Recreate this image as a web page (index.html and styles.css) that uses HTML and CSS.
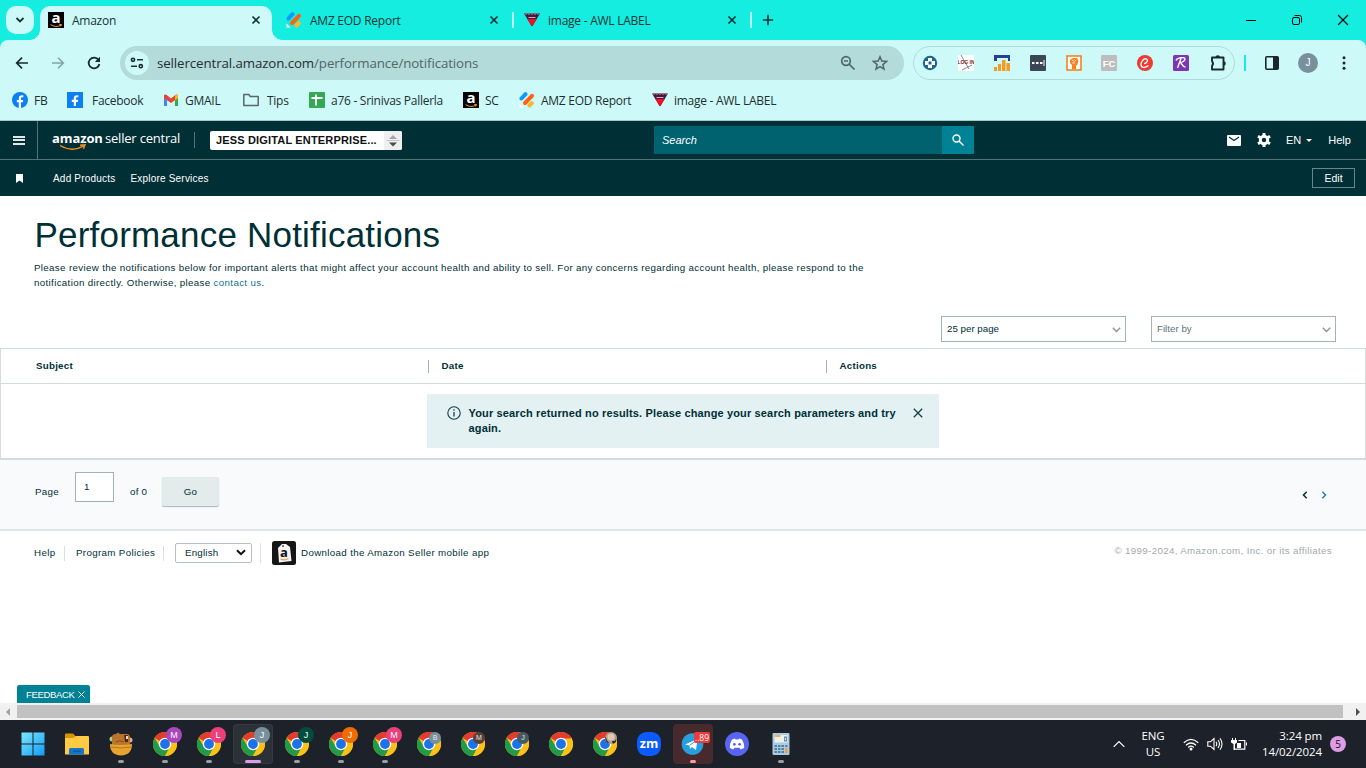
FILE: index.html
```
<!DOCTYPE html>
<html lang="en">

<head>
    <meta charset="UTF-8">
    <meta name="viewport" content="width=device-width, initial-scale=1.0">
    <title>Amazon</title>
    <link rel="stylesheet" href="styles.css">
</head>

<body>
<!-- Shared icons -->
<svg class="defs" width="0" height="0">
    <symbol id="amazon" viewBox="0 0 16 16">
        <rect width="16" height="16" fill="#000"/>
        <text x="8" y="11" font-family="Open Sans, sans-serif" font-size="15" font-weight="700" fill="#fff" text-anchor="middle">a</text>
        <path d="M2.500 12.600q5.500 3.400 10.500.5M11.200 12.400l2.300.1-.8 2" fill="none" stroke="#f19a2e" stroke-width="1"/>
    </symbol>
    <symbol id="eod" viewBox="0 0 16 16">
        <g stroke-width="4" stroke-linecap="round">
            <path d="M2.500 6.500L6.500 2.200" stroke="#0a9bff"/>
            <path d="M6 11L13 3.800" stroke="#ff6110"/>
            <path d="M10.500 13.500l2.300-2.300" stroke="#ffb52b"/>
        </g>
        <path d="M.5 11.500v4h4z" fill="#fff"/>
    </symbol>
    <symbol id="awl" viewBox="0 0 16 16">
        <path d="M0 1.500h16L8.500 14h-1z" fill="#35204c"/>
        <path d="M1 2h14" stroke="#c05a64" stroke-width="1.500" stroke-dasharray="2 1"/>
        <path d="M4.500 5.500h7" stroke="#e9a4b8" stroke-width="1"/>
        <path d="M3.500 7h9L8 14.500z" fill="#fb0d1b"/>
    </symbol>
    <symbol id="close" viewBox="0 0 10 10">
        <path d="M1.500 1.500l7 7M8.500 1.500l-7 7" fill="none" stroke="#173436" stroke-width="1.700"/>
    </symbol>
    <symbol id="chrome" viewBox="0 0 24 24">
        <circle cx="12" cy="12" r="12" fill="#fbbf12"/>
        <path d="M12 12L1.600 6A12 12 0 0 1 22.400 6z" fill="#e33b2e"/>
        <path d="M1.600 6A12 12 0 0 0 12 24L17.200 15 12 12 7 15z" fill="#229b48"/>
        <path d="M12 6.500h10.700A12 12 0 0 1 12 24L16.800 15z" fill="#fbc116"/>
        <circle cx="12" cy="12" r="6.200" fill="#fff"/>
        <circle cx="12" cy="12" r="4.900" fill="#1a73e8"/>
    </symbol>
</svg>

<div class="tabs">
    <div class="tab-search">
        <svg width="10" height="8" viewBox="0 0 10 8"><path d="M1.500 2L5 5.500 8.500 2" fill="none" stroke="#173436" stroke-width="1.800"/></svg>
    </div>
    <div class="tab active">
        <svg class="favicon"><use href="#amazon"/></svg>
        <span class="tab-title">Amazon</span>
        <svg class="tab-close"><use href="#close"/></svg>
    </div>
    <div class="tab">
        <svg class="favicon"><use href="#eod"/></svg>
        <span class="tab-title">AMZ EOD Report</span>
        <svg class="tab-close"><use href="#close"/></svg>
    </div>
    <div class="tab">
        <svg class="favicon"><use href="#awl"/></svg>
        <span class="tab-title">image - AWL LABEL</span>
        <svg class="tab-close"><use href="#close"/></svg>
    </div>
    <svg class="new-tab" width="12" height="12" viewBox="0 0 12 12"><path d="M6 .8v10.400M.8 6h10.400" stroke="#173436" stroke-width="1.700"/></svg>
    <div class="window-buttons">
        <svg width="12" height="12" viewBox="0 0 12 12"><path d="M1 6.500h10" stroke="#000"/></svg>
        <svg width="12" height="12" viewBox="0 0 12 12"><g fill="none" stroke="#000"><rect x="1.500" y="3.500" width="7" height="7" rx="1.500"/><path d="M3.500 1.500h5a2 2 0 0 1 2 2v5"/></g></svg>
        <svg width="12" height="12" viewBox="0 0 12 12"><path d="M1 1l10 10M11 1L1 11" stroke="#000" stroke-width="1.100"/></svg>
    </div>
</div>

<div class="toolbar">
    <div class="nav-buttons">
        <svg width="14" height="14" viewBox="0 0 14 14"><path d="M13 7H2M7 1.700L1.700 7 7 12.300" fill="none" stroke="#172b2c" stroke-width="1.700"/></svg>
        <svg width="14" height="14" viewBox="0 0 14 14"><path d="M1 7h11M7 1.700L12.300 7 7 12.300" fill="none" stroke="#83a3a3" stroke-width="1.600"/></svg>
        <svg width="14" height="14" viewBox="0 0 14 14"><path d="M11.500 3.800A5.400 5.400 0 1 0 12.400 8" fill="none" stroke="#172b2c" stroke-width="1.800"/><path d="M13 .8V6H7.800z" fill="#172b2c"/></svg>
    </div>
    <div class="address">
        <div class="site-info">
            <svg width="14" height="12" viewBox="0 0 14 12"><g fill="none" stroke="#1d3032" stroke-width="1.600"><circle cx="3" cy="2.800" r="1.600"/><path d="M7 2.800h6M1 9.200h6"/><circle cx="10.800" cy="9.200" r="1.600"/></g></svg>
        </div>
        <span class="url">sellercentral.amazon.com<span class="path">/performance/notifications</span></span>
        <svg class="zoom-icon" width="16" height="16" viewBox="0 0 16 16"><g fill="none" stroke="#4f6767" stroke-width="1.700"><circle cx="6" cy="6" r="4.300"/><path d="M4 6h4M9 9l5.500 5.500"/></g></svg>
        <svg width="16" height="16" viewBox="0 0 16 16"><path d="M8 1.800l1.800 4.300 4.700.4-3.600 3.100 1.100 4.600-4-2.500-4 2.500 1.100-4.600L1.500 6.500l4.700-.4z" fill="none" stroke="#4f6767" stroke-width="1.500"/></svg>
    </div>
    <div class="extensions">
        <svg width="16" height="16" viewBox="0 0 16 16"><circle cx="8" cy="8" r="7.200" fill="#1d6691"/><path d="M6 3h4v3h3v4h-3v3H6v-3H3V6h3z" fill="#fff"/><path d="M6.500 6.500h3v3h-3z" fill="#1d6691"/></svg>
        <svg width="16" height="16" viewBox="0 0 16 16"><rect width="16" height="16" fill="#fff"/><path d="M3 0l8 14M4 15l10-5" stroke="#888"/><text x="8" y="9" font-family="Liberation Sans, sans-serif" font-size="5" font-weight="700" fill="#83202a" text-anchor="middle">LOG IN</text></svg>
        <svg width="16" height="16" viewBox="0 0 16 16"><path d="M0 0h16v6H0z" fill="#22409a"/><path d="M3 3h11v3H3z" fill="#cdf9f8"/><path d="M0 12h3v4H0zM4 9h3v7H4zM8 5h3.500v11H8zM12.500 8H16v8h-3.500z" fill="#f69a22"/></svg>
        <svg width="16" height="16" viewBox="0 0 16 16"><rect width="16" height="16" rx="1" fill="#3b4752"/><path d="M2 7h2.500v2H2zM6 7h2.500v2H6zM10 7h2.500v2H10zM13.500 5h1v6h-1z" fill="#fff"/></svg>
        <svg width="16" height="16" viewBox="0 0 16 16"><rect x="1" y="1" width="14" height="14" fill="#fff" stroke="#f5821f" stroke-width="1.600"/><path d="M4 5l3-2 4 0 1.500 3-1.500 4-1 1v3H6v-4L4 8z" fill="#f5821f"/><path d="M6 5l3 2M8 4l2 2M6 8h3" stroke="#fff" stroke-width=".7"/></svg>
        <svg width="16" height="16" viewBox="0 0 16 16"><rect width="16" height="16" rx="1" fill="#bdbdbd"/><text x="8" y="11.500" font-family="Liberation Sans, sans-serif" font-size="9.500" font-weight="700" fill="#fff" text-anchor="middle">FC</text></svg>
        <svg width="16" height="16" viewBox="0 0 16 16"><circle cx="8" cy="8" r="8" fill="#ee3b32"/><path d="M7 8.500c3 0 4.500-3.500 2.500-4.500S4 6 4 9.500s4 4 7.500 1" fill="none" stroke="#fff" stroke-width="1.300"/></svg>
        <svg width="16" height="16" viewBox="0 0 16 16"><rect width="16" height="16" rx="1.500" fill="#7e35b5"/><path d="M3 5.500c1-3 9-4 9-1.500 0 2-3 3.500-5 3.500 2 0 2 4.500 5.500 4.500M8 3.500L4.500 13" fill="none" stroke="#fff" stroke-width="1.400"/></svg>
        <svg width="18" height="18" viewBox="0 0 18 18"><path d="M3 3.500h11.500v12H3v-3.500q2-2.500 0-5z" fill="none" stroke="#1c2b2c" stroke-width="1.900" stroke-linejoin="round"/><path d="M6.500 3.500a2.300 2.300 0 0 1 4.600 0zM14.500 7.200a2.300 2.300 0 0 1 0 4.600z" fill="#1c2b2c"/></svg>
    </div>
    <div class="toolbar-divider"></div>
    <svg class="side-panel" width="14" height="14" viewBox="0 0 14 14"><rect x=".8" y=".8" width="12.400" height="12.400" rx="1" fill="none" stroke="#1d2627" stroke-width="1.600"/><path d="M8 1h5.500v12H8z" fill="#1d2627"/></svg>
    <div class="profile">J</div>
    <svg class="more" width="4" height="16" viewBox="0 0 4 16"><g fill="#1d2627"><circle cx="2" cy="2.800" r="1.500"/><circle cx="2" cy="8" r="1.500"/><circle cx="2" cy="13.200" r="1.500"/></g></svg>
</div>

<div class="bookmarks">
    <div class="bookmark">
        <svg width="16" height="16" viewBox="0 0 16 16"><circle cx="8" cy="8" r="8" fill="#0c7ff2"/><path d="M6.800 16v-5.700h-2V8h2V6.500c0-2.200 1.200-3.300 3.100-3.300l1.400.1v2h-1c-1 0-1.300.5-1.300 1.200V8h2.200l-.4 2.300H9V16z" fill="#fff"/></svg>
        <span>FB</span>
    </div>
    <div class="bookmark wide">
        <svg width="16" height="16" viewBox="0 0 16 16"><rect width="16" height="16" fill="#0c7ff2"/><path d="M6.800 14v-4H4.800V7.700h2V6.500c0-2.200 1.200-3.300 3.100-3.300l1.400.1v2h-1c-1 0-1.300.5-1.300 1.200v1.200h2.200L10.800 10H9v4z" fill="#fff"/></svg>
        <span>Facebook</span>
    </div>
    <div class="bookmark">
        <svg width="16" height="16" viewBox="0 0 16 16"><path d="M1 3.500h3V14H1z" fill="#4285f4"/><path d="M12 3.500h3V14h-3z" fill="#34a853"/><path d="M1 3c1-1 2-.5 3 .3L8 6.500l4-3.200c1-.8 2-1.300 3-.3v3l-7 5-7-5z" fill="#e94235"/><path d="M12 3.500c1-.8 2-1.300 3-.3V6l-3 2.200z" fill="#fbbc04"/></svg>
        <span>GMAIL</span>
    </div>
    <div class="bookmark folder">
        <svg width="16" height="16" viewBox="0 0 16 16"><path d="M.8 2.500h5l1.500 2h7.900v9H.8z" fill="none" stroke="#5b6667" stroke-width="1.500" stroke-linejoin="round"/></svg>
        <span>Tips</span>
    </div>
    <div class="bookmark">
        <svg width="16" height="16" viewBox="0 0 16 16"><rect width="16" height="16" rx="1" fill="#34a853"/><path d="M2.500 6h11M7 2.500v11" stroke="#fff" stroke-width="2"/></svg>
        <span>a76 - Srinivas Pallerla</span>
    </div>
    <div class="bookmark"><svg width="16" height="16"><use href="#amazon"/></svg><span>SC</span></div>
    <div class="bookmark"><svg width="16" height="16"><use href="#eod"/></svg><span>AMZ EOD Report</span></div>
    <div class="bookmark"><svg width="16" height="16"><use href="#awl"/></svg><span>image - AWL LABEL</span></div>
</div>

<div class="page">
    <header class="header">
        <div class="menu-btn"><i></i><i></i><i></i></div>
        <div class="logo">
            <b>amazon</b><span>seller central</span>
            <svg class="smile" width="28" height="7" viewBox="0 0 28 7"><path d="M1 1.500Q13 8.500 24.500 2.200M21 1.200l5-.5-1.500 4" fill="none" stroke="#f08c22" stroke-width="1.400"/></svg>
        </div>
        <div class="account">
            <span>JESS DIGITAL ENTERPRISE...</span>
            <div class="stepper">
                <svg width="14" height="13" viewBox="0 0 14 13"><path d="M3 5h8L7 1z" fill="#a5a5a5"/><path d="M.5 6.500h13" stroke="#c8c8c8"/><path d="M3 8.500h8l-4 4z" fill="#4b4b4b"/></svg>
            </div>
        </div>
        <div class="search">
            <span>Search</span>
            <div class="search-btn">
                <svg width="14" height="14" viewBox="0 0 14 14"><g fill="none" stroke="#fff" stroke-width="1.400"><circle cx="5.500" cy="5.500" r="3.500"/><path d="M8 8l4.500 4.500"/></g></svg>
            </div>
        </div>
        <div class="header-links">
            <svg width="14" height="11" viewBox="0 0 14 11"><rect width="14" height="11" rx="1" fill="#fff"/><path d="M2 2l5 3.500L12 2" fill="none" stroke="#002f36" stroke-width="1.200"/></svg>
            <svg class="gear" width="14" height="14" viewBox="0 0 14 14"><circle cx="7" cy="7" r="3.700" fill="none" stroke="#fff" stroke-width="3"/><path d="M5.500 0h3v3h-3zM5.500 11h3v3h-3zM.2 4.600l1.500-2.700 2.700 1.500-1.500 2.700zM9.600 10.500l1.500-2.600 2.700 1.500-1.500 2.700zM13.800 4.600l-1.500-2.700-2.700 1.500L11.100 6zM4.400 10.500L2.900 7.900.2 9.400l1.500 2.700z" fill="#fff"/></svg>
            <span class="lang">EN</span>
            <i class="caret"></i>
            <span class="help">Help</span>
        </div>
    </header>
    <nav class="subnav">
        <svg width="7" height="9" viewBox="0 0 7 9"><path d="M0 0h7v9L3.500 6.500 0 9z" fill="#fff"/></svg>
        <a class="first">Add Products</a>
        <a>Explore Services</a>
        <button class="edit">Edit</button>
    </nav>

    <main class="main">
        <h1>Performance Notifications</h1>
        <p class="intro">Please review the notifications below for important alerts that might affect your account health and ability to sell. For any concerns regarding account health, please respond to the<br>notification directly. Otherwise, please <a>contact us</a>.</p>

        <div class="filters">
            <div class="dropdown">
                <span>25 per page</span>
                <svg width="9" height="6" viewBox="0 0 9 6"><path d="M.8.800l3.700 3.700L8.200.8" fill="none" stroke="#879596" stroke-width="1.400"/></svg>
            </div>
            <div class="dropdown empty">
                <span>Filter by</span>
                <svg width="9" height="6" viewBox="0 0 9 6"><path d="M.8.800l3.700 3.700L8.200.8" fill="none" stroke="#879596" stroke-width="1.400"/></svg>
            </div>
        </div>

        <div class="table">
            <div class="table-head">
                <span>Subject</span>
                <span>Date</span>
                <span>Actions</span>
            </div>
            <div class="table-body">
                <div class="alert">
                    <svg class="info" width="14" height="14" viewBox="0 0 14 14"><circle cx="7" cy="7" r="6.200" fill="none" stroke="#143f47" stroke-width="1.100"/><path d="M7 3.200v1.500M7 6v4.500" stroke="#143f47" stroke-width="1.300"/></svg>
                    <p>Your search returned no results. Please change your search parameters and try<br>again.</p>
                    <svg class="dismiss" width="10" height="10" viewBox="0 0 10 10"><path d="M.8.800l8.400 8.400M9.200.800L.8 9.200" stroke="#143f47" stroke-width="1.300"/></svg>
                </div>
            </div>
        </div>

        <div class="pagination">
            <span class="page-label">Page</span>
            <div class="page-input">1</div>
            <span class="page-total">of 0</span>
            <button class="go">Go</button>
            <div class="arrows">
                <svg width="6" height="8" viewBox="0 0 6 8"><path d="M4.700.800L1.500 4l3.200 3.200" fill="none" stroke="#002f36" stroke-width="1.500"/></svg>
                <svg width="6" height="8" viewBox="0 0 6 8"><path d="M1.300.800L4.500 4 1.300 7.200" fill="none" stroke="#2383a8" stroke-width="1.500"/></svg>
            </div>
        </div>

        <footer class="footer">
            <a class="footer-help">Help</a>
            <a class="footer-policies">Program Policies</a>
            <div class="language">
                <span>English</span>
                <svg width="10" height="7" viewBox="0 0 10 7"><path d="M1 1.200l4 4 4-4" fill="none" stroke="#111" stroke-width="2"/></svg>
            </div>
            <div class="app">
                <svg width="24" height="24" viewBox="0 0 24 24"><rect width="24" height="24" rx="2.500" fill="#151515"/><path d="M6 7l4-4 4 0 4 3 1.500 14L7 21.500z" fill="#f4f4f4"/><circle cx="11" cy="5" r="1" fill="#555"/><text x="12" y="16" font-family="Open Sans, sans-serif" font-size="13" font-weight="700" fill="#111" text-anchor="middle">a</text><path d="M8.500 18q4 2 8-.5" fill="none" stroke="#f2a23a" stroke-width="1.300"/></svg>
                <span>Download the Amazon Seller mobile app</span>
            </div>
            <span class="copyright">© 1999-2024, Amazon.com, Inc. or its affiliates</span>
        </footer>
    </main>

    <div class="feedback">
        <span>FEEDBACK</span>
        <svg width="7" height="7" viewBox="0 0 7 7"><path d="M.5.500l6 6M6.500.500l-6 6" stroke="#fff"/></svg>
    </div>
</div>

<div class="scrollbar">
    <i class="scroll-left"></i>
    <div class="thumb"></div>
    <i class="scroll-right"></i>
</div>

<div class="taskbar">
    <div class="apps">
        <div class="app-icon">
            <svg width="24" height="24" viewBox="0 0 24 24"><defs><linearGradient id="win" x2="1" y2="1"><stop stop-color="#7be9ff"/><stop offset="1" stop-color="#119bf5"/></linearGradient></defs><path d="M.500.500h11v11H.500zM12.500.500h11v11h-11zM.500 12.500h11v11H.500zM12.500 12.500h11v11h-11z" fill="url(#win)"/></svg>
        </div>
        <div class="app-icon">
            <svg width="24" height="24" viewBox="0 0 24 24"><path d="M0 2.500a1 1 0 0 1 1-1h7l2 2V8H0z" fill="#d99400"/><path d="M0 6h8.500l2-2H23a1 1 0 0 1 1 1v17.500H0z" fill="#ffcb45"/><path d="M4 22.500v-5a1.500 1.500 0 0 1 1.500-1.500h12a1.500 1.500 0 0 1 1.500 1.500v5z" fill="#1276c9"/><path d="M8 18.500h8v1.300H8z" fill="#0a569d"/></svg>
        </div>
        <div class="app-icon running">
            <svg width="24" height="24" viewBox="0 0 24 24"><circle cx="3" cy="7" r="2.500" fill="#b4cf8e"/><circle cx="21" cy="8" r="2.500" fill="#d2b697"/><path d="M3 14V5q0-3 4-3l2-1.500L11 2h7q3 0 3 4v8z" fill="#b8762c"/><path d="M1 12q11 2 22 0 0 11-11 11.500Q1 23 1 12z" fill="#e8a42c"/><path d="M2 15q10 2 20 0" fill="none" stroke="#ba7218"/><path d="M7 10q4-2.500 8 0" fill="none" stroke="#8b501b"/><path d="M15 3h4v7h-3z" fill="#5a251b"/><path d="M17 4h2v3h-2z" fill="#e6dcd2"/></svg>
        </div>
        <div class="app-icon running"><svg width="24" height="24"><use href="#chrome"/></svg><b class="big purple">M</b></div>
        <div class="app-icon running"><svg width="24" height="24"><use href="#chrome"/></svg><b class="big pink">L</b></div>
        <div class="app-icon running current"><svg width="24" height="24"><use href="#chrome"/></svg><b class="big slate">J</b></div>
        <div class="app-icon running"><svg width="24" height="24"><use href="#chrome"/></svg><b class="big green">J</b></div>
        <div class="app-icon running"><svg width="24" height="24"><use href="#chrome"/></svg><b class="big orange">J</b></div>
        <div class="app-icon running"><svg width="24" height="24"><use href="#chrome"/></svg><b class="big pink">M</b></div>
        <div class="app-icon"><svg width="24" height="24"><use href="#chrome"/></svg><b class="slate">B</b></div>
        <div class="app-icon"><svg width="24" height="24"><use href="#chrome"/></svg><b class="brown">M</b></div>
        <div class="app-icon"><svg width="24" height="24"><use href="#chrome"/></svg><b class="dark">J</b></div>
        <div class="app-icon"><svg width="24" height="24"><use href="#chrome"/></svg></div>
        <div class="app-icon">
            <svg width="24" height="24" viewBox="0 0 24 24"><use href="#chrome"/><circle cx="18" cy="6" r="6" fill="#b79e8c"/><circle cx="18" cy="5" r="3.500" fill="#e1c9b8"/><path d="M12.500 4q1 5 4 7l-2 0q-3-3-2-7z" fill="#3d332d"/><path d="M19 9h3l1-2v3l-3 2z" fill="#292522"/></svg>
        </div>
        <div class="app-icon">
            <svg width="24" height="24" viewBox="0 0 24 24"><rect width="24" height="24" rx="9.500" fill="#0b5cff"/><text x="12" y="16" font-family="Open Sans, sans-serif" font-size="12.500" font-weight="700" fill="#fff" text-anchor="middle">zm</text></svg>
        </div>
        <div class="app-icon running alerting">
            <svg width="24" height="24" viewBox="0 0 24 24"><circle cx="11.500" cy="12" r="10.800" fill="#26a0dc"/><path d="M4 12.500L16.500 7 15 18l-4-3-2 2-.5-3.500z" fill="#fff"/><path d="M8.700 13.300l5.500-4" stroke="#26a0dc"/></svg>
            <em>..89</em>
        </div>
        <div class="app-icon">
            <svg width="24" height="24" viewBox="0 0 24 24"><circle cx="12" cy="12" r="12" fill="#5865f2"/><path d="M7 7.500l3-1 .5 1h3l.5-1 3 1q2.500 4 2.200 8.500l-3.500 1.500-1.200-1.800h-5l-1.200 1.800L4.800 16Q4.500 11.500 7 7.500z" fill="#fff"/><circle cx="9.400" cy="12.300" r="1.400" fill="#5865f2"/><circle cx="14.600" cy="12.300" r="1.400" fill="#5865f2"/></svg>
        </div>
        <div class="app-icon running">
            <svg width="24" height="24" viewBox="0 0 24 24"><rect x="3.500" y="1" width="17" height="22" rx="1" fill="#a9cbe4"/><rect x="5.500" y="3" width="13" height="7.500" fill="#eaf2ee"/><path d="M5.500 3h6v2h-6z" fill="#f0b559"/><rect x="15.500" y="5" width="2" height="4" fill="none" stroke="#6a8ea8"/><g fill="#56809f"><path d="M5.500 13h2.500v2H5.500zM9 13h2.500v2H9zM12.500 13H15v2h-2.500zM16.200 13h2.300v2h-2.300zM5.500 16h2.500v2H5.500zM9 16h2.500v2H9zM12.500 16H15v2h-2.500zM5.500 19h2.500v2H5.500zM9 19h2.500v2H9zM12.500 19H15v2h-2.500z"/></g><path d="M16.200 16h2.300v5h-2.300z" fill="#f39c3a"/></svg>
        </div>
    </div>
    <div class="tray">
        <svg width="12" height="8" viewBox="0 0 12 8"><path d="M.7 6.800L6 1.500l5.300 5.300" fill="none" stroke="#fff" stroke-width="1.200"/></svg>
        <div class="keyboard">ENG<br>US</div>
        <svg class="wifi" width="16" height="13" viewBox="0 0 16 13"><g fill="none" stroke="#fff" stroke-width="1.200"><path d="M.8 4.800Q8-2.200 15.200 4.800M3 7.300q5-4.600 10 0M5.200 9.500q2.800-2.600 5.600 0"/></g><circle cx="8" cy="11" r="1.500" fill="#fff"/></svg>
        <svg width="16" height="14" viewBox="0 0 16 14"><g fill="none" stroke="#fff" stroke-width="1.100"><path d="M.8 4.800h2.700L7 1.500v11L3.500 9.200H.800zM9 4.800q1.500 2.200 0 4.400M11 3q3 4 0 8M13 1.300q4 5.700 0 11.400"/></g></svg>
        <svg width="16" height="14" viewBox="0 0 16 14"><path d="M0 3h6v2.500L4 7v6H2.500V7L0 5.500zM1 1h1v2H1zM4 1h1v2H4zM6 6h4v5H6zM15 5.500h1v3h-1z" fill="#fff"/><path d="M7.500 3.500h6.300v8.700H4" fill="none" stroke="#fff" stroke-width="1.200"/></svg>
        <div class="clock">3:24 pm<br>14/02/2024</div>
        <div class="count">5</div>
    </div>
</div>
</body>

</html>
```
FILE: styles.css
```
* {
    box-sizing: border-box;
}

body {
    margin: 0;
    width: 1366px;
    height: 768px;
    overflow: hidden;
    background-color: #14eddf;
    font-family: "Liberation Sans", Arial, sans-serif;
    color: #002f36;
}

svg {
    display: block;
    flex-shrink: 0;
}

.defs {
    display: none;
}

/* Browser tabs */
.tabs {
    display: flex;
    height: 40px;
    padding: 6px 0 0 6px;
    font-family: "Open Sans", "Noto Sans", sans-serif;
    font-size: 12px;
    color: #173436;
}

.tab-search {
    display: flex;
    align-items: center;
    justify-content: center;
    width: 28px;
    height: 28px;
    margin-right: 6px;
    border-radius: 10px;
    background-color: #cdf9f8;
}

.tab {
    display: flex;
    align-items: center;
    position: relative;
    width: 232px;
    height: 34px;
    margin-right: 6px;
    padding: 0 11px 6px 8px;
}

.tab:not(.active)::after {
    content: "";
    position: absolute;
    right: -4px;
    top: 6px;
    width: 2px;
    height: 16px;
    background-color: #b9faf5;
}

.tab.active {
    border-radius: 10px 10px 0 0;
    background-color: #cdf9f8;
}

.tab.active::before,
.tab.active::after {
    content: "";
    position: absolute;
    bottom: 0;
    width: 10px;
    height: 10px;
}

.tab.active::before {
    left: -10px;
    background: radial-gradient(circle at 0 0, transparent 9.5px, #cdf9f8 10px);
}

.tab.active::after {
    right: -10px;
    background: radial-gradient(circle at 100% 0, transparent 9.5px, #cdf9f8 10px);
}

.favicon {
    width: 16px;
    height: 16px;
    margin-right: 8px;
}

.tab-title {
    flex: 1;
    letter-spacing: -0.25px;
    white-space: nowrap;
}

.tab-close {
    width: 10px;
    height: 10px;
}

.new-tab {
    margin: 8px 0 0 8px;
}

.window-buttons {
    display: flex;
    gap: 34px;
    margin: 8px 17px 0 auto;
}

/* Address bar */
.toolbar {
    display: flex;
    align-items: center;
    height: 46px;
    border-radius: 8px 8px 0 0;
    background-color: #cdf9f8;
}

.nav-buttons {
    display: flex;
    gap: 22px;
    width: 120px;
    padding-left: 15px;
}

.address {
    display: flex;
    align-items: center;
    width: 784px;
    height: 34px;
    padding: 0 16px 0 5px;
    border-radius: 17px;
    background-color: #b3dbda;
}

.site-info {
    display: flex;
    align-items: center;
    justify-content: center;
    width: 24px;
    height: 24px;
    border-radius: 50%;
    background-color: #cdf9f8;
}

.url {
    flex: 1;
    padding-left: 8px;
    font-family: "Open Sans", "Noto Sans", sans-serif;
    font-size: 13.3px;
    letter-spacing: -0.1px;
    color: #1d2f30;
}

.path {
    color: #4f6767;
}

.zoom-icon {
    margin-right: 16px;
}

.extensions {
    display: flex;
    align-items: center;
    justify-content: space-between;
    width: 322px;
    height: 34px;
    margin-left: 9px;
    padding: 0 7px 0 8px;
    border: 1px solid #b3dbda;
    border-radius: 17px;
}

.toolbar-divider {
    width: 2px;
    height: 16px;
    margin-left: 9px;
    background-color: #14eddf;
}

.side-panel {
    margin-left: 19px;
}

.profile {
    width: 20px;
    height: 20px;
    margin: 0 24px 0 19px;
    border-radius: 50%;
    background-color: #78909c;
    color: #fff;
    font-size: 10px;
    line-height: 20px;
    text-align: center;
}

/* Bookmarks */
.bookmarks {
    display: grid;
    grid-template-columns: 55px 96px 80px 66px 154px 56px 133px 140px;
    align-items: center;
    height: 35px;
    padding: 0 0 6px 12px;
    border-bottom: 1px solid #a8c9c9;
    background-color: #cdf9f8;
    font-family: "Open Sans", "Noto Sans", sans-serif;
    font-size: 12px;
    letter-spacing: -0.27px;
    color: #1d2f30;
    white-space: nowrap;
}

.bookmark {
    display: flex;
    align-items: center;
    gap: 6px;
}

.bookmark.wide {
    gap: 9px;
}

.bookmark.folder {
    gap: 8px;
}

/* Seller Central header */
.page {
    position: relative;
    height: 582px;
    overflow: hidden;
    background-color: #fff;
}

.header {
    display: flex;
    align-items: center;
    height: 39px;
    border-bottom: 1px solid #557377;
    background-color: #002f36;
    color: #fff;
    font-size: 11px;
}

.menu-btn {
    display: flex;
    flex-direction: column;
    align-items: center;
    justify-content: center;
    gap: 1.500px;
    width: 38px;
    height: 38px;
    border-right: 1px solid #557377;
}

.menu-btn i {
    width: 12px;
    height: 2px;
    background-color: #e2e8e8;
}

.logo {
    position: relative;
    display: flex;
    align-items: center;
    width: 157px;
    height: 16px;
    padding: 0 0 4px 14px;
    border-right: 1px solid #557377;
    font-family: "Open Sans", sans-serif;
    font-size: 13px;
    white-space: nowrap;
}

.logo b {
    width: 53px;
    letter-spacing: -0.1px;
}

.logo span {
    letter-spacing: -0.2px;
}

.smile {
    position: absolute;
    left: 21px;
    top: 12px;
}

.account {
    display: flex;
    align-items: center;
    justify-content: space-between;
    width: 192px;
    height: 19px;
    margin-left: 15px;
    padding-left: 6px;
    border-radius: 2px;
    overflow: hidden;
    background-color: #fff;
    color: #111;
    font-size: 11px;
    font-weight: bold;
    letter-spacing: 0.16px;
    white-space: nowrap;
}

.stepper {
    display: flex;
    align-items: center;
    justify-content: center;
    width: 18px;
    height: 19px;
    background-color: #efefef;
}

.search {
    display: flex;
    align-items: center;
    justify-content: space-between;
    width: 320px;
    height: 28px;
    margin-left: 252px;
    padding-left: 8px;
    background-color: #00616f;
    font-style: italic;
}

.search-btn {
    display: flex;
    align-items: center;
    justify-content: center;
    width: 32px;
    height: 28px;
    background-color: #008296;
}

.header-links {
    display: flex;
    align-items: center;
    margin-left: 253px;
}

.gear {
    margin: 0 15px 0 16px;
}

.caret {
    margin: 0 16px 0 5px;
    border: 3.5px solid transparent;
    border-top-color: #fff;
    border-bottom: 0;
}

.subnav {
    display: flex;
    align-items: center;
    height: 36px;
    padding: 0 11px 0 16px;
    background-color: #002f36;
    color: #fff;
    font-size: 10px;
    letter-spacing: 0.2px;
}

.subnav a {
    margin-left: 15px;
}

.subnav a.first {
    margin-left: 30px;
}

.edit {
    width: 43px;
    height: 20px;
    margin-left: auto;
    padding: 0;
    border: 1px solid #6a8589;
    background: none;
    color: #fff;
    font-family: inherit;
    font-size: 10.500px;
}

/* Content */
.main {
    font-size: 9.75px;
    letter-spacing: 0.34px;
}

h1 {
    margin: 0;
    padding: 19px 0 0 34.5px;
    font-size: 35px;
    font-weight: normal;
    line-height: 40px;
    letter-spacing: 0.2px;
}

.intro {
    margin: 0;
    padding: 5px 0 0 34px;
    line-height: 15px;
    white-space: nowrap;
}

.intro a {
    color: #0d7689;
}

.filters {
    display: flex;
    justify-content: flex-end;
    gap: 25px;
    padding: 26px 30px 6px 0;
}

.dropdown {
    display: flex;
    align-items: center;
    justify-content: space-between;
    width: 185px;
    height: 26px;
    padding: 0 4px 0 5px;
    border: 1px solid #a2b3b4;
    letter-spacing: 0;
}

.dropdown span {
    padding-bottom: 2px;
}

.dropdown svg {
    margin-top: 2px;
}

.dropdown.empty {
    color: #5d7477;
}

.table {
    border: 1px solid #d5dbdb;
    border-bottom: 2px solid #d5dbdb;
}

.table-head {
    display: grid;
    grid-template-columns: 427px 398px 1fr;
    align-items: center;
    height: 35px;
    border-bottom: 1px solid #d5dbdb;
    font-weight: bold;
    letter-spacing: 0.25px;
}

.table-head span {
    height: 13px;
    padding-left: 12.5px;
    border-left: 1px solid #a2b3b4;
    line-height: 11px;
}

.table-head span:first-child {
    padding-left: 35px;
    border: 0;
}

.table-body {
    height: 74px;
    padding: 10px 0 0 426px;
}

.alert {
    display: flex;
    align-items: flex-start;
    width: 512px;
    height: 54px;
    padding: 12px 16px 0 20px;
    background-color: #e3f1f2;
    font-size: 11px;
    font-weight: bold;
    line-height: 15px;
    letter-spacing: 0.145px;
    white-space: nowrap;
}

.alert p {
    flex: 1;
    margin: 0 0 0 7.5px;
}

.dismiss {
    margin-top: 2px;
}

.pagination {
    display: flex;
    align-items: flex-start;
    height: 71px;
    padding-left: 35px;
    border-bottom: 2px solid #e0e4e5;
    background-color: #f8fafc;
}

.page-label {
    width: 40px;
    padding-top: 26px;
}

.page-input {
    width: 39px;
    height: 30px;
    margin-top: 12px;
    padding: 8px 0 0 8px;
    border: 1px solid #a2b3b4;
    background-color: #fff;
}

.page-total {
    width: 48px;
    padding: 26px 0 0 16px;
    letter-spacing: 0.25px;
}

.go {
    width: 57px;
    height: 29px;
    margin-top: 17px;
    padding-bottom: 2px;
    border: 0;
    border-radius: 2px;
    background-color: #e3ebeb;
    box-shadow: 0 1px 1px #adb7b8;
    color: inherit;
    font: inherit;
    letter-spacing: inherit;
}

.arrows {
    display: flex;
    gap: 13px;
    margin: 31px 39px 0 auto;
}

.footer {
    display: flex;
    align-items: center;
    height: 44px;
    padding: 0 34px;
}

.footer-help,
.footer-policies {
    height: 15px;
    border-right: 1px solid #dcdfdf;
    line-height: 13px;
}

.footer-help {
    width: 31px;
}

.footer-policies {
    width: 99px;
    padding-left: 11px;
}

.language {
    display: flex;
    align-items: center;
    justify-content: space-between;
    width: 77px;
    height: 20px;
    margin: -1px 0 0 11px;
    padding: 0 5px 0 9px;
    border: 1px solid #b9bfc0;
    border-radius: 2px;
    letter-spacing: 0.2px;
}

.app {
    display: flex;
    align-items: center;
    gap: 5px;
    height: 20px;
    margin-left: 8px;
    padding-left: 11px;
    border-left: 1px solid #dcdfdf;
}

.app span {
    padding-bottom: 2px;
}

.copyright {
    margin-left: auto;
    padding-bottom: 6px;
    color: #a3a9a9;
}

.feedback {
    position: absolute;
    left: 17px;
    bottom: 0;
    display: flex;
    align-items: center;
    justify-content: space-between;
    width: 73px;
    height: 18px;
    padding: 0 5px 0 9px;
    border-radius: 3px 3px 0 0;
    background-color: #008296;
    box-shadow: 0 0 1px #888;
    color: #fff;
    font-size: 9.500px;
    letter-spacing: -0.35px;
}

.scrollbar {
    display: flex;
    align-items: center;
    height: 17px;
    padding-left: 6px;
    background-color: #f1f1f1;
}

.thumb {
    width: 1326px;
    height: 13px;
    margin: 0 13px 0 7px;
    background-color: #c1c1c1;
}

.scroll-left,
.scroll-right {
    border: 4px solid transparent;
}

.scroll-left {
    border-left: 0;
    border-right-color: #a3a3a3;
}

.scroll-right {
    border-right: 0;
    border-left-color: #505050;
}

/* Windows taskbar */
.taskbar {
    display: flex;
    align-items: center;
    justify-content: space-between;
    height: 48px;
    padding: 0 20px 0 13px;
    background-color: #1d2129;
    color: #fff;
    font-family: "Open Sans", "Noto Sans", sans-serif;
}

.apps {
    display: flex;
    gap: 4px;
}

.app-icon {
    position: relative;
    display: flex;
    align-items: center;
    justify-content: center;
    width: 40px;
    height: 40px;
    border-radius: 4px;
}

.app-icon.running::after {
    content: "";
    position: absolute;
    bottom: 1px;
    width: 6px;
    height: 3px;
    border-radius: 2px;
    background-color: #9b9da1;
}

.app-icon.current {
    background-color: #2c3037;
    box-shadow: inset 0 0 0 1px #353940;
}

.app-icon.current::after {
    width: 16px;
    background-color: #dd9ce4;
}

.app-icon.alerting {
    background-color: #472a2e;
}

.app-icon.alerting::after {
    background-color: #ff99a4;
}

.app-icon b {
    position: absolute;
    right: 8px;
    top: 8px;
    width: 12px;
    height: 12px;
    border-radius: 50%;
    color: #e6e6e6;
    font-family: "Liberation Sans", sans-serif;
    font-size: 7px;
    font-weight: normal;
    line-height: 12px;
    text-align: center;
}

.app-icon b.big {
    right: 3px;
    top: 3px;
    width: 16px;
    height: 16px;
    color: #fff;
    font-size: 9px;
    line-height: 16px;
}

.app-icon b.purple { background-color: #ab47bc; }
.app-icon b.pink { background-color: #ec407a; }
.app-icon b.slate { background-color: #78909c; }
.app-icon b.green { background-color: #004d40; }
.app-icon b.orange { background-color: #ef6c00; }
.app-icon b.brown { background-color: #5d4037; }
.app-icon b.dark { background-color: #455a64; }

.app-icon em {
    position: absolute;
    left: 21px;
    top: 8px;
    width: 16px;
    height: 11px;
    border-radius: 2px;
    background-color: #eb3b3b;
    font-size: 8.500px;
    font-style: normal;
    line-height: 11px;
    text-align: center;
}

.tray {
    display: flex;
    align-items: center;
    gap: 8px;
    font-size: 11.500px;
    line-height: 16px;
    letter-spacing: -0.1px;
}

.keyboard {
    width: 40px;
    text-align: center;
}

.wifi {
    margin-left: 2px;
}

.clock {
    width: 67px;
    text-align: right;
    white-space: nowrap;
}

.count {
    width: 16px;
    height: 16px;
    border-radius: 50%;
    background-color: #dd9ce4;
    color: #111;
    font-size: 10px;
    text-align: center;
}
```
